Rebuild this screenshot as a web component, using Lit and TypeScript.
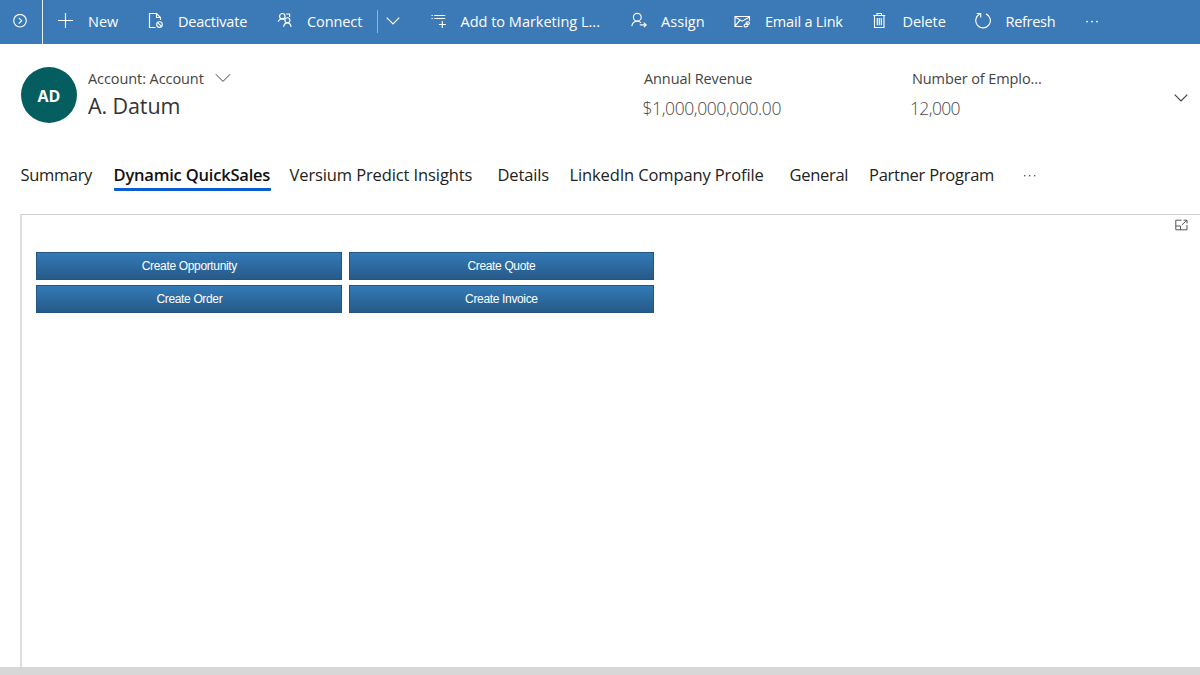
import { LitElement, html, css, svg } from "lit";
import { customElement, property } from "lit/decorators.js";
import { styleMap } from "lit/directives/style-map.js";

const icons: Record<string, unknown> = {
  add: svg`<path d="M1 8.5H16M8.5 1V16" />`,
  deactivate: svg`<path d="M7.5 15.5H1.5V1.5H8.5L12.5 5.5V8M8.5 1.5V5.5H12.5" /><circle cx="11.5" cy="12.5" r="2.8" /><path d="M9.6 10.6L13.4 14.4" />`,
  connect: svg`<circle cx="5.3" cy="4.2" r="2.7" /><path d="M1.2 9.6C1.7 7.9 3.1 7 5 7C5.9 7 6.7 7.2 7.3 7.6M9.2 2H12.6V5" /><circle cx="10.4" cy="8.2" r="2.5" /><path d="M6.6 14.8C7 12.2 8.3 10.8 10.4 10.8C12.5 10.8 13.7 12.2 14.1 14.8" />`,
  list: svg`<path d="M.5 3.5H1.8M3.2 3.5H14.2M.5 6.5H1.8M3.2 6.5H14.2M11.3 9V16M7.8 12.5H14.9" />`,
  assign: svg`<circle cx="6.3" cy="5.2" r="3.9" /><path d="M.8 14.2C1.3 11.1 3.3 9.2 6.1 9.2C7.8 9.2 9.1 9.8 10 10.9M8.8 12.9H15M12.8 10.6L15.2 12.9L12.8 15.2" />`,
  email: svg`<path d="M8.5 14.5H1V4.5H15.5V8.8M1 5L8.2 9.2L15.5 5M1 14.2L5.8 8.3" /><path d="M11.8 10.6L13.4 9.9C15.4 9.2 16.2 11.8 14.4 12.6L13.2 13.1M14 11.9L12.2 12.6M13 11.4L11.3 12.1C9.2 13.1 10.2 15.6 12.2 14.8L14 14.1" />`,
  trash: svg`<path d="M.3 3.5H12.3M4 3.3V1.5H8.5V3.3M1.5 3.5V15.5H11V3.5M4.3 6V13.3M6.3 6V13.3M8.3 6V13.3" />`,
  refresh: svg`<path d="M11 1.9A7.3 7.3 0 1 1 4.7 2.1M1.7 1.5H5.7V5.5" />`,
};

interface Command {
  icon: string;
  label: string;
  width: number;
  gap: number;
  track: number;
}

const commands: Command[] = [
  { icon: "add", label: "New", width: 91, gap: 31, track: 0 },
  { icon: "deactivate", label: "Deactivate", width: 129, gap: 30, track: -0.2 },
  { icon: "connect", label: "Connect", width: 100, gap: 30, track: -0.1 },
];

const moreCommands: Command[] = [
  { icon: "list", label: "Add to Marketing L...", width: 200, gap: 29.5, track: 0 },
  { icon: "assign", label: "Assign", width: 103, gap: 30, track: 0.05 },
  { icon: "email", label: "Email a Link", width: 139, gap: 31, track: -0.2 },
  { icon: "trash", label: "Delete", width: 102, gap: 29.5, track: -0.1 },
  { icon: "refresh", label: "Refresh", width: 111, gap: 30.5, track: -0.3 },
];

const tabs = [
  { label: "Summary", width: 93, track: -0.35 },
  { label: "Dynamic QuickSales", width: 176, track: -0.2, active: true },
  { label: "Versium Predict Insights", width: 208, track: -0.11 },
  { label: "Details", width: 72, track: -0.15 },
  { label: "LinkedIn Company Profile", width: 220, track: -0.13 },
  { label: "General", width: 79.5, track: -0.3 },
  { label: "Partner Program", width: 154, track: -0.25 },
];

@customElement("command-bar")
class CommandBar extends LitElement {
  static styles = css`
    :host { display: flex; height: 44px; background: #3c79b7; color: #fff; font: 14.5px/44px "Open Sans", sans-serif; }
    .expand { border-right: 1.5px solid #e3edf6; box-sizing: border-box; flex: none; width: 43px; display: flex; padding: 14px 0 0 13px; margin-right: 14px; }
    .item { display: flex; flex: none; white-space: nowrap; }
    .icon { flex: none; padding-top: 12px; line-height: 0; box-sizing: border-box; }
    svg { fill: none; stroke: #fff; stroke-width: 1.15; display: block; }
    .split { width: 1px; height: 23px; background: #8fb3d7; margin: 10px 8px 0 0; }
    .chev { padding-top: 16px; width: 45px; }
    .dots { padding-top: 20px; }
    .dots svg { fill: #fff; stroke: none; }
  `;

  item(c: Command) {
    return html`<div class="item" style=${styleMap({ width: `${c.width}px` })}>
      <div class="icon" style=${styleMap({ width: `${c.gap}px` })}>
        <svg width="17" height="17" viewBox="0 0 17 17">${icons[c.icon]}</svg>
      </div>
      <span style=${styleMap({ letterSpacing: `${c.track}px` })}>${c.label}</span>
    </div>`;
  }

  render() {
    return html`
      <div class="expand">
        <svg width="15" height="15" viewBox="0 0 15 15"><circle cx="7" cy="6.7" r="6.3" /><path d="M5.7 3.8L8.7 6.7L5.7 9.6" /></svg>
      </div>
      ${commands.map((c) => this.item(c))}
      <div class="split"></div>
      <div class="chev"><svg width="14" height="10" viewBox="0 0 14 10"><path d="M.7 1.7L7 8L13.3 1.7" /></svg></div>
      ${moreCommands.map((c) => this.item(c))}
      <div class="dots"><svg width="14" height="4" viewBox="0 0 14 4"><circle cx="1" cy="1.6" r=".9" /><circle cx="6" cy="1.6" r=".9" /><circle cx="11" cy="1.6" r=".9" /></svg></div>
    `;
  }
}

@customElement("record-header")
class RecordHeader extends LitElement {
  static styles = css`
    :host { display: flex; height: 106px; padding: 23px 0 0 21px; box-sizing: border-box; color: #333; font-family: "Open Sans", sans-serif; white-space: nowrap; }
    .avatar { width: 56px; height: 56px; border-radius: 50%; background: #045d5f; color: #fff; font-weight: 700; font-size: 16px; line-height: 58px; text-align: center; flex: none; }
    .who { margin-left: 11px; width: 556px; flex: none; }
    .type { font-size: 14.5px; line-height: 24px; display: flex; color: #444; letter-spacing: -0.08px; }
    .name { font-size: 21.5px; line-height: 29px; letter-spacing: -0.1px; }
    svg { fill: none; stroke: #444; display: block; }
    .type svg { margin: 6px 0 0 11px; }
    .field { flex: none; width: 268px; }
    .label { font-size: 14.5px; line-height: 24px; color: #444; letter-spacing: -0.1px; }
    .value { font-size: 17.5px; line-height: 34px; color: #484848; font-weight: 300; margin-left: -1.5px; letter-spacing: -0.4px; }
    .count { letter-spacing: -0.62px; margin-left: -2px; }
    .more { margin: 26px 0 0 -6px; }
  `;

  render() {
    return html`
      <div class="avatar">AD</div>
      <div class="who">
        <div class="type"><span>Account: Account</span><svg width="16" height="10" viewBox="0 0 16 10"><path d="M.8 1.2L8 8.4L15.2 1.2" /></svg></div>
        <div class="name">A. Datum</div>
      </div>
      <div class="field"><div class="label">Annual Revenue</div><div class="value">$1,000,000,000.00</div></div>
      <div class="field"><div class="label">Number of Emplo...</div><div class="value count">12,000</div></div>
      <div class="more"><svg width="14" height="10" viewBox="0 0 14 10"><path stroke-width="1.2" d="M.7 1.7L7 8L13.3 1.7" /></svg></div>
    `;
  }
}

@customElement("tab-strip")
class TabStrip extends LitElement {
  static styles = css`
    :host { display: flex; height: 64px; padding: 13px 0 0 20.5px; box-sizing: border-box; color: #222; font: 16.5px/24px "Open Sans", sans-serif; white-space: nowrap; }
    .tab { flex: none; }
    .active { font-weight: 600; color: #111; display: block; width: 157px; padding-bottom: 1px; border-bottom: 3px solid #0b5bd0; border-radius: 1px; }
    .dots { padding-top: 11px; }
    .dots svg { display: block; fill: #444; }
  `;

  render() {
    return html`
      ${tabs.map((t) => html`<div class="tab" style=${styleMap({ width: `${t.width}px` })}>
        <span class=${t.active ? "active" : "plain"} style=${styleMap({ letterSpacing: `${t.track}px` })}>${t.label}</span>
      </div>`)}
      <div class="dots"><svg width="14" height="4" viewBox="0 0 14 4"><circle cx="1.7" cy="1.8" r=".8" /><circle cx="6.7" cy="1.8" r=".8" /><circle cx="11.7" cy="1.8" r=".8" /></svg></div>
    `;
  }
}

@customElement("quick-button")
class QuickButton extends LitElement {
  @property() label = "";

  static styles = css`
    :host { display: block; height: 28px; box-sizing: border-box; border: 1px solid #245580; background: linear-gradient(#337ab7, #265a88); color: #fff; text-align: center; font: 12px/26px "Liberation Sans", sans-serif; }
    span { letter-spacing: -0.34px; }
  `;

  render() {
    return html`<span>${this.label}</span>`;
  }
}

@customElement("app-root")
class AppRoot extends LitElement {
  static styles = css`
    :host { display: flex; flex-direction: column; width: 1200px; height: 675px; background: #fff; overflow: hidden; }
    .panel { flex: 1; margin-left: 20px; border-left: 2px solid #dfdfdf; border-top: 1px solid #cfcfcf; display: flex; justify-content: space-between; }
    .grid { display: grid; grid-template-columns: 306px 305px; column-gap: 6.5px; row-gap: 5px; align-content: start; padding: 37px 0 0 14.4px; }
    .popout { padding: 4px 12px 0 0; }
    svg { display: block; fill: none; stroke: #555; }
    .footer { height: 8.5px; background: #d7d7d7; flex: none; }
  `;

  render() {
    return html`
      <command-bar></command-bar>
      <record-header></record-header>
      <tab-strip></tab-strip>
      <div class="panel">
        <div class="grid">
          ${["Create Opportunity", "Create Quote", "Create Order", "Create Invoice"].map((l) => html`<quick-button label=${l}></quick-button>`)}
        </div>
        <div class="popout"><svg width="13" height="12" viewBox="0 0 13 12"><path d="M6.5 1.2H.8V10.8H12V6M.8 7H5.5V10.8M8.5 1.2H12V4.5M12 1.2L6.8 6" /></svg></div>
      </div>
      <div class="footer"></div>
    `;
  }
}
